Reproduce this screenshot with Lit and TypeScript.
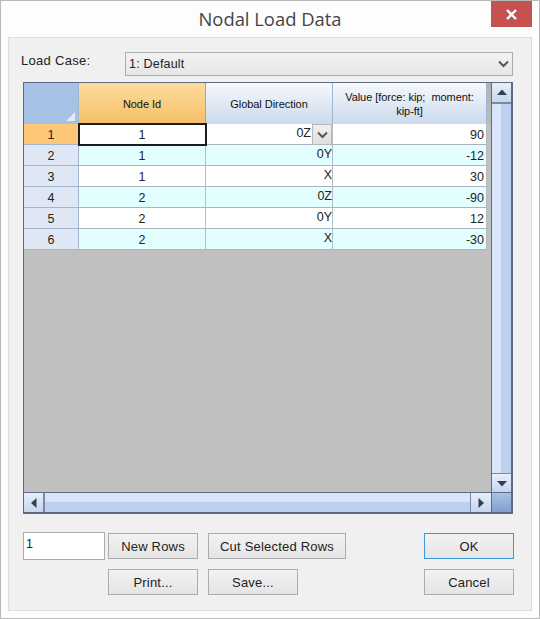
import { LitElement, html, css, svg } from "lit";
import { customElement } from "lit/decorators.js";

const rows = [
  ["1", "1", "0Z", "90"],
  ["2", "1", "0Y", "-12"],
  ["3", "1", "X", "30"],
  ["4", "2", "0Z", "-90"],
  ["5", "2", "0Y", "12"],
  ["6", "2", "X", "-30"],
];

const chevron = svg`<svg width="11" height="8" viewBox="0 0 11 8"><path d="M1 1.5 L5.5 6 L10 1.5" fill="none" stroke="#555" stroke-width="2"/></svg>`;
const arrow = (d: string) => svg`<svg width="12" height="12" viewBox="0 0 12 12"><path d="${d}" fill="#333f55"/></svg>`;

@customElement("app-root")
export class AppRoot extends LitElement {
  static styles = css`
    :host { display: block; width: 540px; height: 619px; font-family: "Liberation Sans", Arial, sans-serif; color: #222; }
    * { box-sizing: border-box; }
    .window { width: 540px; height: 619px; background: #fdfdfd; border: 1px solid #b9b9b9; display: flex; flex-direction: column; padding: 0 7px 7px; position: relative; }
    .title { height: 36px; padding-bottom: 2px; display: flex; align-items: center; justify-content: center; font-family: "Open Sans", "Noto Sans", sans-serif; font-size: 18.4px; color: #444; }
    .close { position: absolute; top: 0; right: 7px; width: 41px; height: 26px; background: #c75050; display: flex; align-items: center; justify-content: center; }
    .panel { flex: 1; background: #f0f0f0; border: 1px solid #dcdcdc; padding: 14px 0 0 14px; display: flex; flex-direction: column; font-size: 13px; }
    .case { display: flex; align-items: center; height: 24px; margin: 0 18px 6px -2px; }
    .case label { width: 104px; margin-top: -8px; letter-spacing: .3px; }
    .select { flex: 1; height: 24px; border: 1px solid #acacac; background: linear-gradient(#f2f2f2, #e6e6e6); display: flex; align-items: center; justify-content: space-between; padding: 0 3px; font-size: 12.5px; letter-spacing: .2px; }
    .grid { height: 432px; width: 490px; border: 1px solid #5f6b80; border-width: 1px 2px 2px 1px; display: grid; grid-template-columns: 1fr 20px; grid-template-rows: 1fr 20px; background: #c0c0c0; }
    .sheet { display: grid; grid-template-columns: 55px 127px 127px 154px 1fr; grid-auto-rows: 21px; grid-template-rows: 41px; align-content: start; min-width: 0; font-size: 12px; }
    .sheet-wrap { background: #c0c0c0; min-width: 0; }
    .hd { display: flex; align-items: center; justify-content: center; text-align: center; font-size: 11px; letter-spacing: -.05px; line-height: 14px; background: linear-gradient(#f6f9fd, #cbd9ec); border-right: 1px solid #9eb6ce; padding: 0 4px; color: #111; }
    .hd.active { background: linear-gradient(#fcdc9c, #f6bf69); border-right-color: #c8a060; }
    .hd.corner { background: #a6c1e6; position: relative; }
    .hd-gap { background: linear-gradient(#aeb2b8, #bcbcbc); }
    .corner-mark { position: absolute; right: 3px; bottom: 3px; width: 0; height: 0; border-left: 9px solid transparent; border-bottom: 9px solid #e2ebf6; }
    .c { display: flex; align-items: center; border-right: 1px solid #b4bcc4; border-bottom: 1px solid #aab4be; background: #fff; font-size: 12.5px; padding-top: 2px; position: relative; }
    .alt { background: #e2fefe; }
    .rn { justify-content: center; background: #dfe7f4; border-right-color: #9eb6ce; border-bottom-color: #9eb6ce; }
    .rn.active { background: #fcc878; }
    .ctr { justify-content: center; }
    .dir { justify-content: flex-end; align-items: flex-start; padding-top: 2px; }
    .val { justify-content: flex-end; padding-right: 2px; }
    .sel { outline: 2px solid #1c1c1c; outline-offset: -1px; z-index: 2; }
    .dd { width: 20px; height: 21px; margin: -2px 0 0 1px; background: linear-gradient(#f0f0f0,#dfdfdf); border: 1px solid #b8b8b8; display: flex; align-items: center; justify-content: center; }
    .spacer { grid-column: 5; }
    .vbar { background: linear-gradient(90deg, #d9e6f9 50%, #bcd1ef 50%); border-left: 1px solid #5f6b80; display: flex; flex-direction: column; justify-content: space-between; }
    .hbar { background: linear-gradient(#d9e6f9 50%, #bcd1ef 50%); border-top: 1px solid #5f6b80; display: flex; justify-content: space-between; }
    .sbtn-v { height: 21px; border-bottom: 2px solid #7a8aa6; background: linear-gradient(#e8f0fc, #c6d6ee); display: flex; align-items: center; justify-content: center; }
    .sbtn-v.end { border-bottom: none; border-top: 1px solid #7a8aa6; height: 19px; }
    .sbtn-h { width: 21px; border-right: 2px solid #7a8aa6; background: linear-gradient(#e6eefb, #c6d6ee); display: flex; align-items: center; justify-content: center; }
    .sbtn-h.end { border-right: none; border-left: 1px solid #7a8aa6; }
    .cornerbox { background: linear-gradient(#a8c2e8, #7f9fcc); border-left: 1px solid #5f6b80; border-top: 1px solid #5f6b80; }
    .bottom { display: grid; grid-template-columns: 85px 100px 138px 1fr 90px; grid-template-rows: 26px 26px; row-gap: 10px; margin-top: 19px; width: 491px; }
    input { width: 82px; height: 28px; margin-top: -1px; border: 1px solid #acacac; background: #fff; font: 12.5px "Liberation Sans", Arial, sans-serif; padding: 0 0 4px 2px; color: #222; outline: none; }
    button { height: 26px; border: 1px solid #acacac; background: linear-gradient(#f2f2f2, #e5e5e5); font: 13px "Liberation Sans", Arial, sans-serif; letter-spacing: .2px; color: #222; padding: 0; }
    button.ok { border-color: #3c9ad8; }
    .narrow { width: 90px; grid-column: 2; }
    .cut { grid-column: 3; }
    .okc { grid-column: 5; }
    .save { grid-column: 3; width: 90px; }
  `;

  render() {
    return html`<div class="window">
      <div class="title">Nodal Load Data</div>
      <div class="close"><svg width="11" height="11" viewBox="0 0 11 11"><path d="M1 1 L10 10 M10 1 L1 10" stroke="#fff" stroke-width="2.4"/></svg></div>
      <div class="panel">
        <div class="case"><label>Load Case:</label>
          <div class="select"><span>1: Default</span>${chevron}</div></div>
        <div class="grid">
          <div class="sheet-wrap"><div class="sheet">
            <div class="hd corner"><span class="corner-mark"></span></div>
            <div class="hd active">Node Id</div>
            <div class="hd">Global Direction</div>
            <div class="hd">Value [force: kip;&nbsp; moment: kip-ft]</div>
            <div class="hd-gap"></div>
            ${rows.map((r, i) => {
              const alt = i % 2 === 1 ? "alt" : "";
              return html`<div class="c rn ${i === 0 ? "active" : ""}">${r[0]}</div>
                <div class="c ctr ${alt} ${i === 0 ? "sel" : ""}">${r[1]}</div>
                <div class="c dir ${alt}">${r[2]}${i === 0 ? html`<span class="dd">${chevron}</span>` : ""}</div>
                <div class="c val ${alt}">${r[3]}</div>
                <div class="spacer"></div>`;
            })}
          </div></div>
          <div class="vbar">
            <div class="sbtn-v">${arrow("M6 2.5 L11 8 L1 8 Z")}</div>
            <div class="sbtn-v end">${arrow("M6 9.5 L11 4 L1 4 Z")}</div>
          </div>
          <div class="hbar">
            <div class="sbtn-h">${arrow("M3 6 L8.5 1 L8.5 11 Z")}</div>
            <div class="sbtn-h end">${arrow("M9 6 L3.5 1 L3.5 11 Z")}</div>
          </div>
          <div class="cornerbox"></div>
        </div>
        <div class="bottom">
          <input value="1" />
          <button class="narrow">New Rows</button>
          <button class="cut">Cut Selected Rows</button>
          <button class="ok okc">OK</button>
          <button class="narrow">Print...</button>
          <button class="save">Save...</button>
          <button class="okc">Cancel</button>
        </div>
      </div>
    </div>`;
  }
}
